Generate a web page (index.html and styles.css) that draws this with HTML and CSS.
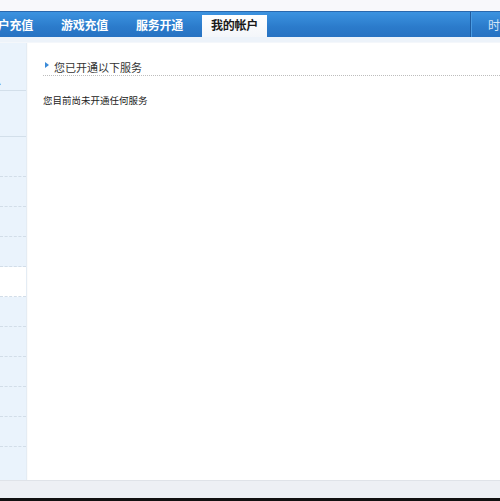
FILE: index.html
```html
<!DOCTYPE html>
<html lang="zh-CN">
<head>
<meta charset="utf-8">
<title>我的帐户</title>
<link rel="stylesheet" href="styles.css">
</head>
<body>
<div class="page">
  <div class="top"></div>
  <div class="nav">
    <ul class="tabs">
      <li class="tab">帐户充值</li>
      <li class="tab">游戏充值</li>
      <li class="tab">服务开通</li>
      <li class="tab active">我的帐户</li>
    </ul>
    <div class="nav-right">
      <span class="sep"></span>
      <span class="nav-time">时间</span>
    </div>
  </div>
  <div class="subbar"></div>
  <div class="main">
    <div class="side">
      <div class="side-head"><span>帐号信息</span></div>
      <div class="side-block"></div>
      <div class="side-gap"></div>
      <div class="side-item"></div>
      <div class="side-item"></div>
      <div class="side-item"></div>
      <div class="side-item current"></div>
      <div class="side-item"></div>
      <div class="side-item"></div>
      <div class="side-item"></div>
      <div class="side-item"></div>
      <div class="side-item"></div>
    </div>
    <div class="content">
      <h2 class="sec-title"><span class="arrow"></span>您已开通以下服务</h2>
      <p class="empty">您目前尚未开通任何服务</p>
    </div>
  </div>
  <div class="footer"></div>
</div>
</body>
</html>
```

FILE: styles.css
```css
html, body {
  margin: 0;
  padding: 0;
  background: #ffffff;
}
body {
  font-family: "Noto Sans CJK SC", "Noto Sans", sans-serif;
  color: #333333;
  overflow: hidden;
}
.page {
  width: 500px;
  height: 501px;
  display: flex;
  flex-direction: column;
  overflow: hidden;
}
.top {
  height: 11px;
  background: #f8f8fb;
  flex: none;
}
.nav {
  height: 25px;
  border-top: 1px solid #2a68ad;
  background: linear-gradient(#3c93e0, #2b7bcb 60%, #2772c2);
  display: flex;
  justify-content: space-between;
  flex: none;
  overflow: hidden;
}
.tabs {
  list-style: none;
  margin: 0 0 0 -23px;
  padding: 3px 0 0 0;
  display: flex;
  gap: 10px;
}
.tab {
  width: 65px;
  height: 22px;
  line-height: 20px;
  text-align: center;
  font-size: 12px;
  font-weight: bold;
  color: #ffffff;
  letter-spacing: -0.2px;
}
.tab.active {
  background: linear-gradient(#ffffff, #f3f6fa);
  color: #1a1a1a;
}
.nav-right {
  display: flex;
  align-items: center;
  gap: 17px;
  width: 30px;
  overflow: hidden;
  flex: none;
}
.sep {
  width: 1px;
  height: 25px;
  background: #1f5c9f;
  box-shadow: 1px 0 0 #4a9be3;
  flex: none;
}
.nav-time {
  font-size: 12px;
  color: #d6e6f7;
  white-space: nowrap;
}
.subbar {
  height: 5px;
  background: #edf3fa;
  border-bottom: 1px solid #f4f7fb;
  flex: none;
}
.main {
  flex: none;
  height: 437px;
  display: flex;
}
.side {
  width: 26px;
  background: #eaf3fc;
  border-right: 1px solid #e4ecf4;
  flex: none;
  overflow: hidden;
}
.side-head {
  box-sizing: border-box;
  height: 48px;
  border-bottom: 1px solid #d3dfea;
  display: flex;
  justify-content: flex-end;
  align-items: flex-end;
  padding-right: 25px;
  padding-bottom: 3px;
  font-size: 11px;
  line-height: 14px;
  color: #333;
  white-space: nowrap;
}
.side-head span {
  flex: none;
}
.side-block {
  height: 45px;
  border-bottom: 1px solid #d3dfea;
}
.side-gap {
  height: 39px;
  border-bottom: 1px dashed #d2dde8;
}
.side-item {
  height: 29px;
  border-bottom: 1px dashed #d2dde8;
}
.side-item.current {
  background: #ffffff;
}
.content {
  flex: 1;
  padding-left: 15px;
  border-left: 1px solid #fbfbfb;
}
.sec-title {
  margin: 18px 0 0 0;
  padding: 0 0 1px 11px;
  height: 13px;
  line-height: 13px;
  font-size: 11px;
  font-weight: normal;
  color: #333333;
  border-bottom: 1px dotted #bdbdbd;
  position: relative;
}
.arrow {
  position: absolute;
  left: 2px;
  top: 1px;
  width: 0;
  height: 0;
  border-top: 3px solid transparent;
  border-bottom: 3px solid transparent;
  border-left: 4px solid #3a8ad8;
}
.empty {
  margin: 18px 0 0 0;
  font-size: 9.5px;
  line-height: 12px;
  color: #222222;
}
.footer {
  flex: none;
  height: 17px;
  background: #edf0f4;
  border-top: 1px solid #dfe3e8;
  border-bottom: 3px solid #111111;
}
```
